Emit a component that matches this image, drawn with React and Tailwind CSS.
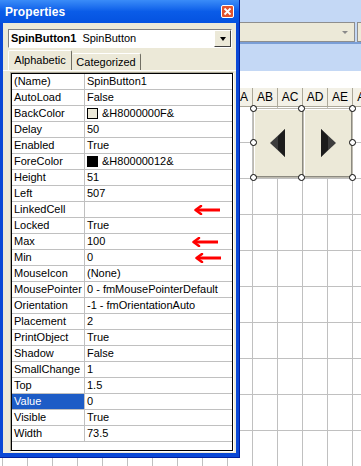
const rows = [
  { name: "(Name)", value: "SpinButton1" },
  { name: "AutoLoad", value: "False" },
  { name: "BackColor", value: "&H8000000F&", swatch: "bg-[#ece9d8]" },
  { name: "Delay", value: "50" },
  { name: "Enabled", value: "True" },
  { name: "ForeColor", value: "&H80000012&", swatch: "bg-black" },
  { name: "Height", value: "51" },
  { name: "Left", value: "507" },
  { name: "LinkedCell", value: "", arrow: "mr-[11px]" },
  { name: "Locked", value: "True" },
  { name: "Max", value: "100", arrow: "mr-[13px]" },
  { name: "Min", value: "0", arrow: "mr-[10px]" },
  { name: "MouseIcon", value: "(None)" },
  { name: "MousePointer", value: "0 - fmMousePointerDefault" },
  { name: "Orientation", value: "-1 - fmOrientationAuto" },
  { name: "Placement", value: "2" },
  { name: "PrintObject", value: "True" },
  { name: "Shadow", value: "False" },
  { name: "SmallChange", value: "1" },
  { name: "Top", value: "1.5" },
  { name: "Value", value: "0", selected: true },
  { name: "Visible", value: "True" },
  { name: "Width", value: "73.5" },
];

// columns hidden under the window keep no label
const cols = ["", "", "", "", "", "", "", "", "", "AA", "AB", "AC", "AD", "AE", "AF"];

function RedArrow({ className }) {
  return (
    <svg width="28" height="10" viewBox="0 0 28 10" className={"ml-auto shrink-0 " + className}>
      <path d="M3 5 H27" stroke="#ff0000" strokeWidth="3" fill="none" />
      <path d="M8 1 L2.5 5 L8 9" stroke="#ff0000" strokeWidth="2.5" fill="none" strokeLinecap="round" strokeLinejoin="round" />
    </svg>
  );
}

function Handle({ className }) {
  return <div className={"absolute w-[7px] h-[7px] rounded-full bg-white border border-black " + className} />;
}

function Sheet() {
  return (
    <div className="flex flex-col">
      {/* toolbar strip */}
      <div className="h-[71px] bg-[#c4d8f5] flex flex-col">
        <div className="h-[22px]" />
        <div className="h-[20px] flex">
          <div className="ml-[200px] w-[155px] bg-[#ece9d8] border border-[#8e8e8e] flex items-center justify-end pr-[6px]">
            <div className="w-0 h-0 border-l-[3px] border-r-[3px] border-t-[3px] border-l-transparent border-r-transparent border-t-[#8a8a8a]" />
          </div>
          <div className="ml-[2px] flex-1 bg-[#ece9d8] border-l border-t border-b border-[#8e8e8e]" />
        </div>
        <div className="h-[2px] bg-[#7a9ed6]" />
      </div>
      <div className="h-[17px] bg-white" />
      {/* column header */}
      <div className="h-[19px] flex bg-[#f3f1e7] border-b border-[#aca899]">
        <div className="w-[3px] shrink-0 border-r border-[#aca899]" />
        {cols.map((c, i) => (
          <div key={i} className="w-[25px] shrink-0 border-r border-[#aca899] flex items-center justify-center text-[12px] text-black">
            {c}
          </div>
        ))}
      </div>
      {Array.from({ length: 11 }).map((_, r) => (
        <div key={r} className="h-[36px] flex border-b border-[#c0c0c0]">
          <div className="w-[3px] shrink-0 border-r border-[#c0c0c0]" />
          {cols.map((c, i) => (
            <div key={i} className="w-[25px] shrink-0 border-r border-[#c0c0c0]" />
          ))}
        </div>
      ))}
    </div>
  );
}

function SpinButton() {
  return (
    <div className="absolute left-[253px] top-[108px] w-[100px] h-[70px]">
      <div className="absolute inset-0 flex gap-[1px] p-[1px] bg-[#bdbab0]">
        <div className="flex-1 bg-[#ece9d8] border-t border-l border-white border-r border-b border-r-[#8c8a80] border-b-[#8c8a80] flex items-center justify-center">
          <svg width="16" height="30" viewBox="0 0 16 30">
            <polygon points="0,15 15,1 15,29" fill="#3c3c3c" />
            <polygon points="8,8.5 15,1 15,29 8,21.5" fill="#1c1c1c" />
          </svg>
        </div>
        <div className="flex-1 bg-[#ece9d8] border-t border-l border-white border-r border-b border-r-[#8c8a80] border-b-[#8c8a80] flex items-center justify-center">
          <svg width="16" height="30" viewBox="0 0 16 30">
            <polygon points="16,15 1,1 1,29" fill="#3c3c3c" />
            <polygon points="8,8.5 1,1 1,29 8,21.5" fill="#1c1c1c" />
          </svg>
        </div>
      </div>
      <Handle className="-left-[3px] -top-[3px]" />
      <Handle className="left-[45px] -top-[3px]" />
      <Handle className="-right-[3px] -top-[3px]" />
      <Handle className="-left-[3px] top-[31px]" />
      <Handle className="-right-[3px] top-[31px]" />
      <Handle className="-left-[3px] -bottom-[3px]" />
      <Handle className="left-[45px] -bottom-[3px]" />
      <Handle className="-right-[3px] -bottom-[3px]" />
    </div>
  );
}

function PropertiesWindow() {
  return (
    <div className="absolute left-0 top-0 w-[240px] h-[458px] flex flex-col bg-[#0a48d6] border-r border-b border-[#00209e]">
      <div className="h-[23px] shrink-0 bg-gradient-to-b from-[#3a8cf8] via-[#0a5ce8] to-[#0552e0] flex items-center pl-[5px] pr-[5px]">
        <span className="text-white font-bold text-[12px] tracking-[0.1px]">Properties</span>
        <div className="ml-auto w-[13px] h-[13px] rounded-[2px] border border-white bg-[#e2532d] flex items-center justify-center">
          <svg width="9" height="9" viewBox="0 0 9 9">
            <path d="M1.5 1.5 L7.5 7.5 M7.5 1.5 L1.5 7.5" stroke="white" strokeWidth="1.8" />
          </svg>
        </div>
      </div>
      <div className="flex-1 flex flex-col bg-[#ece9d8] ml-[3px] mr-[3px] mb-[4px] pt-[6px]">
        {/* object combo */}
        <div className="h-[19px] ml-[5px] mr-[4px] flex bg-white border border-t-[#808080] border-l-[#808080] border-r-white border-b-white">
          <div className="flex-1 flex items-center pl-[2px] text-[11px] text-black whitespace-nowrap">
            <span className="font-bold">SpinButton1</span>
            <span className="ml-[6px]">SpinButton</span>
          </div>
          <div className="w-[17px] bg-[#ece9d8] border border-t-white border-l-white border-r-[#404040] border-b-[#404040] flex items-center justify-center">
            <div className="w-0 h-0 border-l-[3.5px] border-r-[3.5px] border-t-[4px] border-l-transparent border-r-transparent border-t-black" />
          </div>
        </div>
        {/* tabs */}
        <div className="h-[20px] mt-[2px] flex items-end pl-[5px] text-[11px] text-black">
          <div className="h-[20px] w-[64px] flex items-center justify-center bg-[#ece9d8] border-t border-l border-r border-t-white border-l-white border-r-[#716f64] rounded-t-[2px]">
            Alphabetic
          </div>
          <div className="h-[17px] w-[69px] flex items-center justify-center border-t border-r border-t-white border-r-[#716f64] rounded-t-[2px]">
            Categorized
          </div>
        </div>
        {/* property grid */}
        <div className="flex-1 flex flex-col border-t border-white pl-[7px] pr-[2px] pt-[1px] pb-[1px]">
          <div className="flex-1 flex flex-col border border-t-[#aca899] border-l-[#aca899] border-r-white border-b-white">
            <div className="flex-1 flex flex-col bg-white border border-black text-[11px] text-black">
              {rows.map((r) => (
                <div key={r.name} className="h-[16px] flex border-b border-[#c0c0c0] whitespace-nowrap">
                  <div className={"w-[73px] shrink-0 border-r border-[#c0c0c0] flex items-center pl-[2px] " + (r.selected ? "bg-[#1d5cc6] text-white" : "")}>
                    {r.name}
                  </div>
                  <div className="flex-1 flex items-center pl-[2px]">
                    {r.swatch && <div className={"w-[11px] h-[11px] border border-black mr-[4px] " + r.swatch} />}
                    {r.value}
                    {r.arrow && <RedArrow className={r.arrow} />}
                  </div>
                </div>
              ))}
            </div>
          </div>
        </div>
      </div>
    </div>
  );
}

export default function App() {
  return (
    <div className="relative w-[361px] h-[466px] overflow-hidden bg-white" style={{ fontFamily: '"Liberation Sans", Arial, sans-serif' }}>
      <Sheet />
      <SpinButton />
      <PropertiesWindow />
    </div>
  );
}
